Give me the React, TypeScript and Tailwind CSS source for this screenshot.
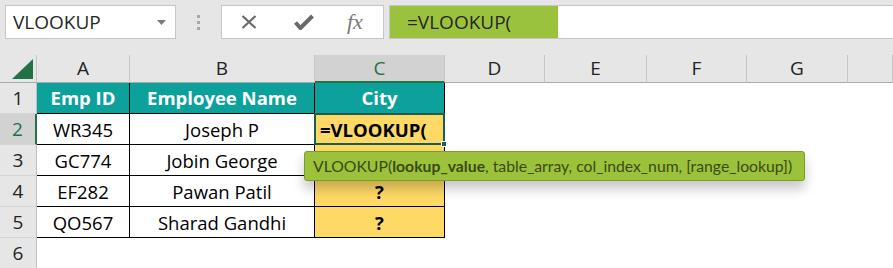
import React from "react";

const cols = ["A", "B", "C", "D", "E", "F", "G", ""];

type Row = { id: string; name: string; city: string };

const rows: Row[] = [
  { id: "WR345", name: "Joseph P", city: "=VLOOKUP(" },
  { id: "GC774", name: "Jobin George", city: "" },
  { id: "EF282", name: "Pawan Patil", city: "?" },
  { id: "QO567", name: "Sharad Gandhi", city: "?" },
];

function Blank() {
  return <div className="bg-white" />;
}

export default function App() {
  return (
    <div className="relative w-[893px] h-[268px] overflow-hidden bg-white font-['Open_Sans',sans-serif] text-black">
      {/* Name box + formula bar */}
      <div className="h-[55px] bg-[#e6e6e6] flex items-start pt-[5px]">
        <div className="ml-[5px] w-[171px] h-[34px] bg-white border border-[#c6c6c6] flex items-center justify-between pl-[7px] pr-[9px]">
          <span className="text-[19px] text-[#262626] leading-none">VLOOKUP</span>
          <svg width="9" height="5" viewBox="0 0 9 5">
            <path d="M0 0h9L4.5 5z" fill="#7a7a7a" />
          </svg>
        </div>
        <div className="w-[45px] h-[34px] flex items-center justify-center">
          <svg width="3" height="15" viewBox="0 0 3 15">
            <rect x="0" y="0" width="3" height="3" fill="#a8a8a8" />
            <rect x="0" y="6" width="3" height="3" fill="#a8a8a8" />
            <rect x="0" y="12" width="3" height="3" fill="#a8a8a8" />
          </svg>
        </div>
        <div className="w-[163px] h-[34px] bg-white border border-[#c6c6c6] flex items-center pl-[19px]">
          <svg width="16" height="14" viewBox="0 0 16 14">
            <path d="M1.5 1l13 12M14.5 1l-13 12" stroke="#6a6a6a" strokeWidth="2.2" fill="none" />
          </svg>
          <svg className="ml-[37px]" width="20" height="16" viewBox="0 0 20 16">
            <path d="M1.5 8.5l5 5.5L18.5 2" stroke="#6a6a6a" strokeWidth="4" fill="none" strokeLinejoin="miter" />
          </svg>
          <span className="ml-[33px] font-['Liberation_Serif',serif] italic text-[22px] text-[#7a7a7a] leading-none">
            fx
          </span>
        </div>
        <div className="ml-[5px] flex-1 h-[34px] bg-white border-y border-l border-[#c6c6c6] flex">
          <div className="w-[168px] h-full bg-[#9bc23c] flex items-center pl-[17px]">
            <span className="text-[19px] text-[#262626] leading-none">=VLOOKUP(</span>
          </div>
        </div>
      </div>

      {/* Sheet grid */}
      <div className="grid grid-cols-[37px_93px_185px_130px_100px_102px_100px_101px_45px] grid-rows-[28px_repeat(6,31px)] text-[18.5px]">
        {/* column headers */}
        <div className="bg-[#e6e6e6] border-r border-[#c6c6c6] border-b border-b-[#ababab] flex items-end justify-end pr-[3px] pb-[3px]">
          <svg width="21" height="20" viewBox="0 0 21 20">
            <path d="M21 0V20H0z" fill="#217346" />
          </svg>
        </div>
        {cols.map((c) =>
          c === "C" ? (
            <div
              key={c}
              className="bg-[#d2d2d2] border-r border-[#c6c6c6] border-b-2 border-b-[#217346] flex items-center justify-center text-[19px] text-[#217346]"
            >
              C
            </div>
          ) : (
            <div
              key={c || "H"}
              className="bg-[#e6e6e6] border-r border-[#c6c6c6] border-b border-b-[#ababab] flex items-center justify-center text-[19px] text-[#222]"
            >
              {c}
            </div>
          )
        )}

        {/* row 1: table header */}
        <div className="bg-[#e6e6e6] border-r border-[#bfbfbf] border-b border-b-[#d4d4d4] flex items-center justify-center text-[19px] text-[#222]">
          1
        </div>
        {["Emp ID", "Employee Name", "City"].map((h) => (
          <div
            key={h}
            className="bg-[#0ca19b] border-r border-b border-black flex items-center justify-center font-bold text-white"
          >
            {h}
          </div>
        ))}
        {[0, 1, 2, 3, 4].map((i) => (
          <Blank key={i} />
        ))}

        {/* data rows */}
        {rows.map((r, i) => {
          const n = i + 2;
          const active = n === 2;
          return (
            <React.Fragment key={r.id}>
              <div
                className={
                  active
                    ? "bg-[#d2d2d2] border-r-2 border-[#217346] border-b border-b-[#d4d4d4] flex items-center justify-center text-[19px] text-[#217346]"
                    : "bg-[#e6e6e6] border-r border-[#bfbfbf] border-b border-b-[#d4d4d4] flex items-center justify-center text-[19px] text-[#222]"
                }
              >
                {n}
              </div>
              <div className="bg-white border-r border-b border-black flex items-center justify-center pt-[1px]">
                {r.id}
              </div>
              <div className="bg-white border-r border-b border-black flex items-center justify-center pt-[1px]">
                {r.name}
              </div>
              {active ? (
                <div className="relative bg-[#ffd966] border-r border-b border-black flex items-center pl-[5px] pt-[1px] font-bold">
                  {r.city}
                  <div className="absolute -left-[1px] -top-[1px] -right-[1px] -bottom-[1px] border-2 border-[#1d5b53]" />
                  <div className="absolute -right-[3px] -bottom-[3px] w-[6px] h-[6px] bg-[#1d5b53] border border-white" />
                </div>
              ) : (
                <div className="bg-[#ffd966] border-r border-b border-black flex items-center justify-center pt-[1px] font-bold">
                  {r.city}
                </div>
              )}
              {[0, 1, 2, 3, 4].map((k) => (
                <Blank key={k} />
              ))}
            </React.Fragment>
          );
        })}

        {/* row 6 */}
        <div className="bg-[#e6e6e6] border-r border-[#bfbfbf] border-b border-b-[#d4d4d4] flex items-center justify-center text-[19px] text-[#222]">
          6
        </div>
        {[0, 1, 2, 3, 4, 5, 6, 7].map((k) => (
          <Blank key={k} />
        ))}
      </div>

      {/* function argument tooltip */}
      <div className="absolute left-[304px] top-[151px] w-[501px] h-[30px] bg-[#9cc23c] border border-[#7d9c2e] rounded-[3px] shadow-[0_8px_12px_rgba(0,0,0,0.22)] flex items-center pl-[8px] font-['Lato',sans-serif] text-[15.75px] text-[#3b4a15] whitespace-nowrap">
        <span>
          VLOOKUP(<b>lookup_value</b>, table_array, col_index_num, [range_lookup])
        </span>
      </div>
    </div>
  );
}
